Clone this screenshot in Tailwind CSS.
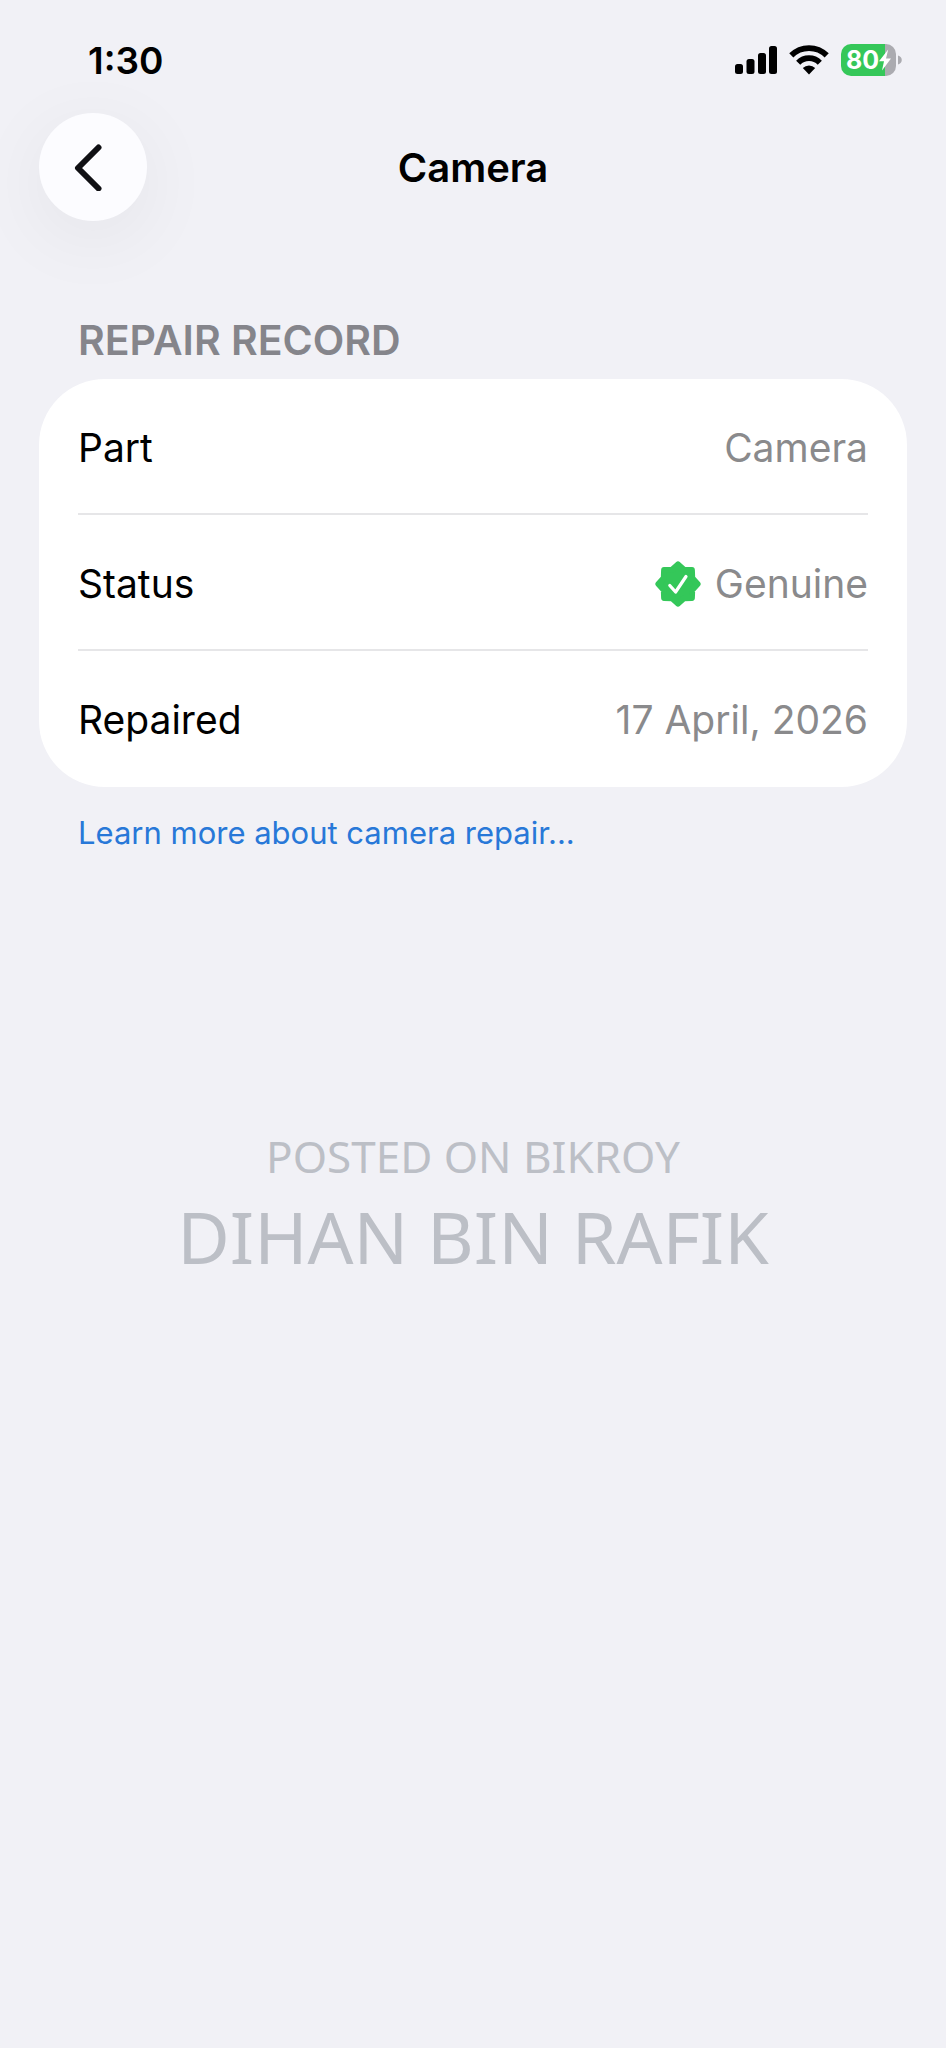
<!DOCTYPE html>
<html lang="en">
<head>
  <meta charset="UTF-8" />
  <meta name="viewport" content="width=device-width, initial-scale=1.0" />
  <title>Camera</title>
  <script src="https://cdn.jsdelivr.net/npm/@tailwindcss/browser@4"></script>
</head>
<body class="min-h-screen bg-[#f1f1f6] font-['Inter',sans-serif] text-black">
  <!-- Status bar -->
  <div class="flex h-[113px] items-start justify-between pt-10 pr-11 pl-[88px]">
    <time class="text-[37px] leading-[42px] font-semibold">1:30</time>
    <div class="flex h-10 items-center gap-3">
      <svg class="h-7 w-[42px]" viewBox="0 0 42 28" fill="currentColor" aria-label="Signal">
        <rect x="0" y="18" width="8" height="10" rx="2.5" />
        <rect x="11.5" y="13" width="8" height="15" rx="2.5" />
        <rect x="23" y="7" width="8" height="21" rx="2.5" />
        <rect x="34" y="0" width="8" height="28" rx="2.5" />
      </svg>
      <svg class="h-[30px] w-10" viewBox="0 0 40 30" aria-label="Wi-Fi">
        <g fill="none" stroke="currentColor" stroke-width="5.8">
          <path d="M2.3 10.4a25 25 0 0 1 35.4 0" />
          <path d="M9.2 17.7a15.2 15.2 0 0 1 21.6 0" />
        </g>
        <path fill="currentColor" d="M13.8 23.1a8.8 8.8 0 0 1 12.4 0L20 29.6z" />
      </svg>
      <div class="flex items-center gap-[2px]">
        <div class="flex h-8 w-[55px] items-center justify-center rounded-[10px] bg-linear-to-r from-[#35c759] from-80% to-[#ababb0] to-80% text-white">
          <span class="text-[25px] leading-8 font-bold">80</span>
          <svg class="h-[22px] w-3" viewBox="0 0 12 22" fill="currentColor" aria-label="Charging">
            <path d="M9.2 0.5L0 12.2h5L3 21.5L12 9.4H7z" />
          </svg>
        </div>
        <svg class="h-[10px] w-1" viewBox="0 0 4 10" fill="#ababb0"><path d="M0 0.5C5 2 5 8 0 9.5z" /></svg>
      </div>
    </div>
  </div>

  <header class="grid grid-cols-[108px_1fr_108px] items-center px-[39px]">
    <button type="button" aria-label="Back" class="flex size-[108px] items-center justify-center rounded-full bg-[#fcfcff] shadow-[0_16px_80px_rgba(0,0,0,0.06)]">
      <svg class="mr-2 h-12 w-8" viewBox="0 0 32 48" fill="none" stroke="#101014" stroke-width="6" stroke-linecap="round" stroke-linejoin="round">
        <path d="M25.5 4.5L5 25l20.5 20.5" />
      </svg>
    </button>
    <h1 class="pt-[2px] text-center text-[40px] leading-[48px] font-semibold">Camera</h1>
  </header>

  <main class="px-[39px] pt-[94px]">
    <h2 class="px-[39px] text-[41px] leading-[50px] font-semibold text-[#85858b]">REPAIR RECORD</h2>

    <dl class="mt-[14px] divide-y-2 divide-[#e6e6e8] rounded-[66px] bg-white px-[39px] text-[39px] leading-[48px]">
      <div class="flex h-[136px] items-center justify-between pt-1">
        <dt>Part</dt>
        <dd class="text-[#8a8a8c]">Camera</dd>
      </div>
      <div class="flex h-[136px] items-center justify-between pt-1">
        <dt>Status</dt>
        <dd class="flex items-center gap-[14px] text-[#8a8a8c]">
          <svg class="size-[46px]" viewBox="0 0 46 46" aria-hidden="true">
            <path fill="#34c759" stroke="#34c759" stroke-width="6" stroke-linejoin="round" d="M23 3.4L28.9 8.8L36.9 9.1L37.2 17.1L42.6 23L37.2 28.9L36.9 36.9L28.9 37.2L23 42.6L17.1 37.2L9.1 36.9L8.8 28.9L3.4 23L8.8 17.1L9.1 9.1L17.1 8.8Z" />
            <path fill="none" stroke="#fff" stroke-width="3.2" stroke-linecap="round" stroke-linejoin="round" d="M14.8 24.5L20.6 31L31 15.5" />
          </svg>
          Genuine
        </dd>
      </div>
      <div class="flex h-[136px] items-center justify-between pt-[2px]">
        <dt>Repaired</dt>
        <dd class="text-[#8a8a8c]">17 April, 2026</dd>
      </div>
    </dl>

    <a href="#" class="mt-7 block px-[39px] text-[31px] leading-9 text-[#2878d8]">Learn more about camera repair...</a>
  </main>

  <footer class="mt-[273px] text-center font-['Noto_Sans',sans-serif] text-[#bcbfc6]">
    <p class="text-[44px] leading-[64px]">POSTED ON BIKROY</p>
    <p class="text-[72px] leading-24">DIHAN BIN RAFIK</p>
  </footer>
</body>
</html>
